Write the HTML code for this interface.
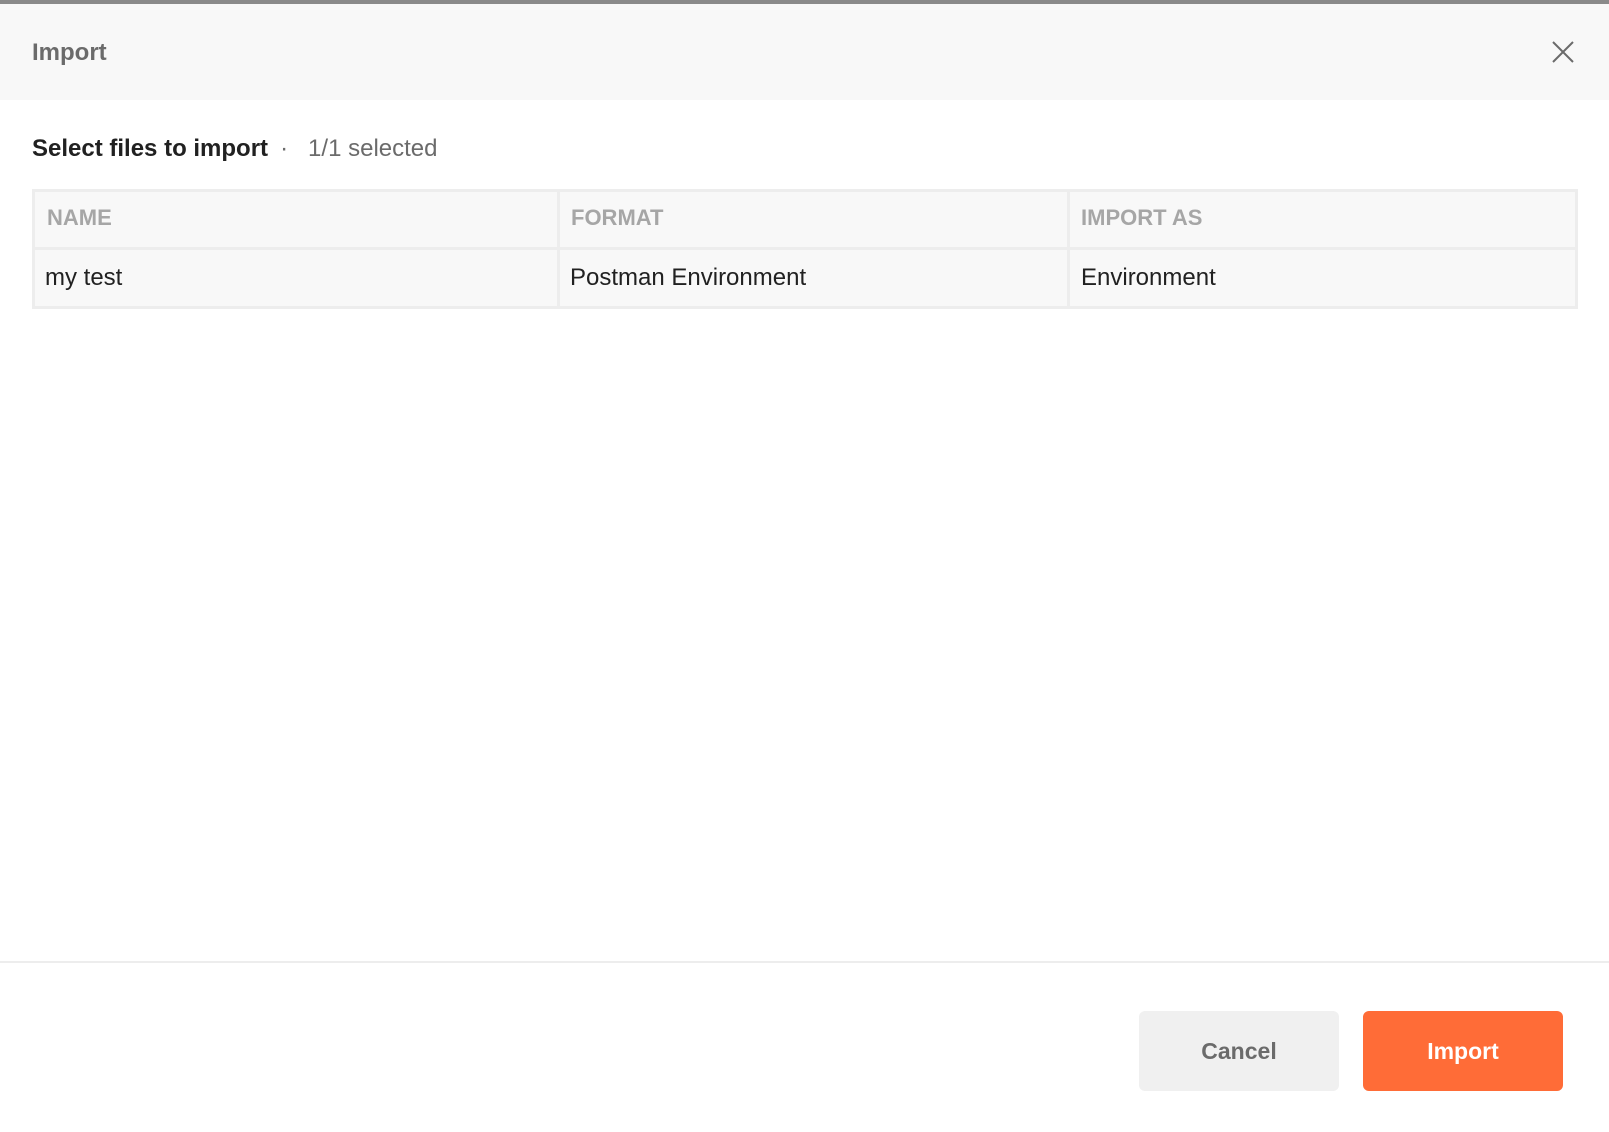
<!DOCTYPE html>
<html><head><meta charset="utf-8"><style>
*{margin:0;padding:0;box-sizing:border-box}
body{width:1609px;height:1132px;background:#fff;font-family:"Liberation Sans",sans-serif;position:relative;overflow:hidden}
.topbar{position:absolute;left:0;top:0;width:1609px;height:4px;background:#8a8a8a}
.hdr{position:absolute;left:0;top:4px;width:1609px;height:96px;background:#f8f8f8}
.title{position:absolute;left:32px;top:39px;font-size:24px;font-weight:bold;color:#6b6b6b;line-height:28px}
.x{position:absolute;left:1551px;top:40px}
.sel{position:absolute;left:32px;top:135px;font-size:24px;line-height:28px;color:#212121;white-space:nowrap}
.sel b{font-weight:bold}
.sel span{color:#6b6b6b;margin-left:12px}
.tbl{position:absolute;left:32px;top:189px;width:1546px;height:120px;background:#ededed}
.c{position:absolute;background:#f8f8f8;font-size:24px;line-height:28px;display:flex;align-items:center;white-space:nowrap}
.h{color:#a6a6a6;font-weight:bold;font-size:22px;padding-bottom:3px}
.r{color:#212121}
.line{position:absolute;left:0;top:961px;width:1609px;height:2px;background:#ededed}
.btn{position:absolute;top:1011px;width:200px;height:80px;border-radius:6px;font-size:23px;font-weight:bold;display:flex;align-items:center;justify-content:center}
</style></head><body>
<div class="topbar"></div>
<div class="hdr"></div>
<div class="title">Import</div>
<svg class="x" width="24" height="24" viewBox="0 0 24 24"><path d="M2 2L22 22M22 2L2 22" stroke="#6b6b6b" stroke-width="2" fill="none"/></svg>
<div class="sel"><b>Select files to import</b><span>·&nbsp;&nbsp; 1/1 selected</span></div>
<div class="tbl">
<div class="c h" style="left:3px;top:3px;width:522px;height:55px;padding-left:12px">NAME</div>
<div class="c h" style="left:528px;top:3px;width:507px;height:55px;padding-left:11px">FORMAT</div>
<div class="c h" style="left:1038px;top:3px;width:505px;height:55px;padding-left:11px">IMPORT AS</div>
<div class="c r" style="left:3px;top:61px;width:522px;height:56px;padding-left:10px">my test</div>
<div class="c r" style="left:528px;top:61px;width:507px;height:56px;padding-left:10px">Postman Environment</div>
<div class="c r" style="left:1038px;top:61px;width:505px;height:56px;padding-left:11px">Environment</div>
</div>
<div class="line"></div>
<div class="btn" style="left:1139px;background:#f0f0f0;color:#6b6b6b">Cancel</div>
<div class="btn" style="left:1363px;background:#ff6c37;color:#fff">Import</div>
</body></html>
